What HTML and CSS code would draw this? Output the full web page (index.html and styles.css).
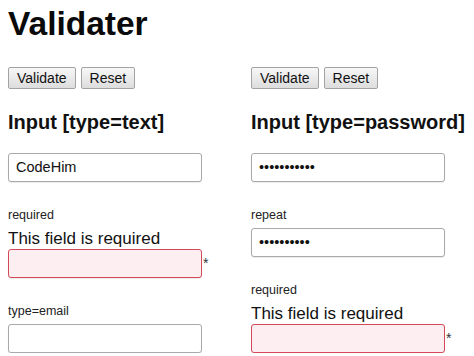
FILE: index.html
```html
<!DOCTYPE html>
<html lang="en">
<head>
<meta charset="utf-8">
<title>Validater</title>
<link rel="stylesheet" href="styles.css">
</head>
<body>
  <h1 class="title">Validater</h1>
  <div class="columns">
    <section class="col">
      <div class="buttons">
        <button class="btn" type="button">Validate</button>
        <button class="btn" type="button">Reset</button>
      </div>
      <h3 class="col-title">Input [type=text]</h3>
      <div class="field field-first">
        <div class="row"><input class="input" type="text" value="CodeHim"></div>
      </div>
      <div class="field">
        <label class="label">required</label>
        <div class="error">This field is required</div>
        <div class="row"><input class="input input-invalid" type="text"><span class="star">*</span></div>
      </div>
      <div class="field">
        <label class="label">type=email</label>
        <div class="row"><input class="input" type="email"></div>
      </div>
    </section>
    <section class="col">
      <div class="buttons">
        <button class="btn" type="button">Validate</button>
        <button class="btn" type="button">Reset</button>
      </div>
      <h3 class="col-title">Input [type=password]</h3>
      <div class="field field-first">
        <div class="row"><input class="input" type="password" value="12345678901"></div>
      </div>
      <div class="field">
        <label class="label">repeat</label>
        <div class="row"><input class="input" type="password" value="1234567890"></div>
      </div>
      <div class="field">
        <label class="label">required</label>
        <div class="error">This field is required</div>
        <div class="row"><input class="input input-invalid" type="password"><span class="star">*</span></div>
      </div>
    </section>
  </div>
</body>
</html>
```
FILE: styles.css
```css
html, body {
  background: #ffffff;
}
body {
  margin: 0;
  padding: 7px 8px 0;
  font-family: "Liberation Sans", Arial, sans-serif;
  color: #111111;
}
.title {
  margin: 0;
  font-size: 33.5px;
  line-height: 33px;
  font-weight: bold;
  color: #0a0a0a;
}
.columns {
  display: grid;
  grid-template-columns: 243px 1fr;
  margin-top: 27px;
}
.buttons {
  display: flex;
  gap: 5px;
}
.btn {
  box-sizing: border-box;
  height: 22px;
  padding: 0 8px;
  border: 1px solid #a3a3a3;
  border-radius: 2px;
  background: linear-gradient(#f7f7f7, #dddddd);
  font-family: "Liberation Sans", Arial, sans-serif;
  font-size: 14px;
  color: #111111;
  line-height: 20px;
}
.col-title {
  margin: 22px 0 18.5px;
  font-size: 20px;
  line-height: 23px;
  font-weight: bold;
  color: #111111;
}
.field {
  margin-top: 26px;
}
.field-first {
  margin-top: 0;
}
.label {
  display: block;
  font-size: 12.5px;
  line-height: 15px;
  margin-bottom: 5px;
  color: #222222;
}
.error {
  font-size: 17px;
  line-height: 21px;
  color: #111111;
}
.row {
  display: flex;
  align-items: baseline;
}
.input {
  box-sizing: border-box;
  width: 194px;
  height: 29px;
  margin: 0;
  padding: 0 6px 0 7px;
  border: 1px solid #a9a9a9;
  border-radius: 3px;
  background: #ffffff;
  font-family: "Liberation Sans", Arial, sans-serif;
  font-size: 14.5px;
  color: #111111;
  box-shadow: 0 1px 1px rgba(0, 0, 0, 0.08);
  outline: none;
}
.input-invalid {
  border-color: #d24a58;
  background: #fdeff1;
}
.star {
  margin-left: 1px;
  font-size: 14px;
  color: #333333;
}
```
